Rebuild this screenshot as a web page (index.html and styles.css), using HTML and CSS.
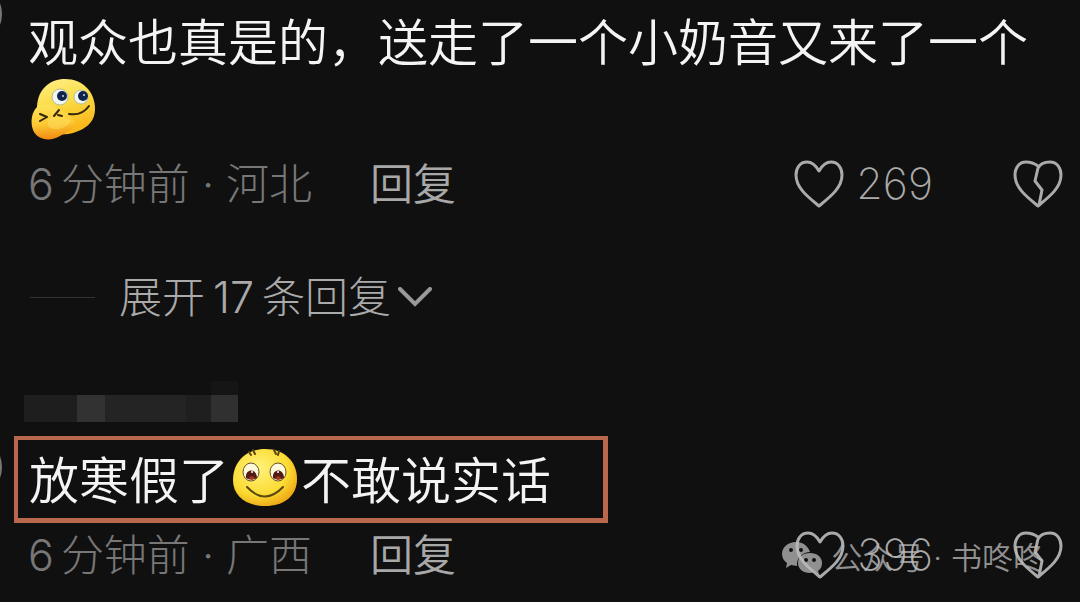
FILE: index.html
```
<!DOCTYPE html>
<html lang="zh-CN">
<head>
<meta charset="utf-8">
<title>评论</title>
<link rel="stylesheet" href="styles.css">
</head>
<body>
<svg class="defs" aria-hidden="true">
  <defs>
    <linearGradient id="skin" x1="0" y1="0" x2="0.3" y2="1">
      <stop offset="0" stop-color="#fff08a"/><stop offset="0.5" stop-color="#fbdc45"/><stop offset="1" stop-color="#f9b81c"/>
    </linearGradient>
    <linearGradient id="hand" x1="0.3" y1="0" x2="0.4" y2="1">
      <stop offset="0" stop-color="#fde35a"/><stop offset="0.55" stop-color="#fcc933"/><stop offset="1" stop-color="#f28a12"/>
    </linearGradient>
    <radialGradient id="face" cx="0.4" cy="0.35" r="0.7">
      <stop offset="0" stop-color="#fff27e"/><stop offset="0.65" stop-color="#fbdc33"/><stop offset="1" stop-color="#eda514"/>
    </radialGradient>
    <symbol id="heart" viewBox="0 0 50 48">
      <path d="M25 11C21 4 17 2 13 2C6 2 2 8 2 15C2 28 14 37 25 46C36 37 48 28 48 15C48 8 44 2 37 2C33 2 29 4 25 11Z"/>
    </symbol>
    <symbol id="broken" viewBox="0 0 50 48">
      <path d="M25 6C21 3 17 2 13 2C6 2 2 8 2 15C2 28 14 37 25 46C36 37 48 28 48 15C48 8 44 2 37 2C31 2 27 4 25 8L22 21L29 30L26 45"/>
    </symbol>
  </defs>
</svg>
<main class="comments">
  <article class="comment">
    <span class="avatar-edge"></span>
    <p class="text">观众也真是的，送走了一个小奶音又来了一个<svg class="emoji" viewBox="0 0 66 66" role="img" aria-label="偷笑">
      <path fill="url(#skin)" d="M7 30C8 13 20 3 35 3C53 3 65 16 65 33C65 47 54 55 38 58C22 60 6 50 7 30Z"/>
      <path fill="url(#hand)" d="M7 31C13 27 23 28 28 34C36 36 42 40 45 46C43 54 36 57 30 60C20 66 7 64 3 54C0 45 2 36 7 31Z"/>
      <path fill="#ffe267" opacity=".45" d="M18 43C26 39 36 40 41 45C36 53 24 56 18 50Z"/>
      <circle cx="30" cy="21" r="8" fill="#f0f6f2" stroke="#b5bd90"/><circle cx="51" cy="21" r="7" fill="#f0f6f2" stroke="#b5bd90"/>
      <circle cx="32" cy="20" r="5" fill="#11234f"/><circle cx="53" cy="20" r="5" fill="#11234f"/>
      <circle cx="33" cy="20" r="1" fill="#cde"/><circle cx="54" cy="19" r="1" fill="#cde"/>
      <path class="stroke" d="M39 38Q52 40 59 30M10 38L17 41L10 45M29 34L24 40M28 39L32 40"/>
    </svg></p>
    <footer class="meta">
      <span class="time"><span class="num">6</span>分钟前<span class="dot">·</span>河北</span>
      <button class="reply" type="button">回复</button>
      <button class="like" type="button" aria-label="赞 269"><svg class="icon"><use href="#heart"/></svg><span>269</span></button>
      <button class="dislike" type="button" aria-label="不喜欢"><svg class="icon"><use href="#broken"/></svg></button>
    </footer>
    <button class="expand" type="button">
      <span class="rule"></span><span>展开<span class="count">17</span>条回复</span><svg class="chevron" viewBox="0 0 34 20"><path d="M2 2L17 17L32 2"/></svg>
    </button>
  </article>
  <article class="comment">
    <div class="mosaic"><i class="tile-a"></i><i class="tile-b"></i><i class="tile-c"></i><i class="tile-d"></i><i class="tile-e"></i></div>
    <span class="avatar-edge"></span>
    <p class="text highlight"><span>放寒假了</span><svg class="emoji" viewBox="0 0 66 66" role="img" aria-label="微笑">
      <path fill="url(#face)" d="M33 5C53 5 65 18 65 35C65 52 52 62 33 62C14 62 1 52 1 36C1 18 14 5 33 5Z"/>
      <ellipse cx="19" cy="28" rx="8" ry="9" fill="#fff9dc" stroke="#665322"/><ellipse cx="46" cy="28" rx="8" ry="9" fill="#fff9dc" stroke="#665322"/>
      <path fill="#521b16" d="M14 34C13 24 25 24 25 34Q19 37 14 34ZM41 34C40 24 52 24 52 34Q46 37 41 34Z"/>
      <circle cx="20" cy="28" r="1" fill="#fff"/><circle cx="46" cy="28" r="1" fill="#fff"/>
      <path fill="#a23620" d="M16 34L20 32L23 34L20 36ZM43 34L46 32L50 34L46 36Z"/>
      <path class="stroke thin" d="M15 43Q33 62 51 43M17 8L19 11M21 6L23 10M42 6L44 10M47 7L46 11"/>
    </svg><span>不敢说实话</span></p>
    <footer class="meta">
      <span class="time"><span class="num">6</span>分钟前<span class="dot">·</span>广西</span>
      <button class="reply" type="button">回复</button>
      <button class="like" type="button" aria-label="赞 396"><svg class="icon"><use href="#heart"/></svg><span>396</span></button>
      <button class="dislike" type="button" aria-label="不喜欢"><svg class="icon"><use href="#broken"/></svg></button>
    </footer>
  </article>
</main>
<div class="watermark">
  <svg class="wechat" viewBox="0 0 42 34">
    <path fill-rule="evenodd" d="M15 1C7 1 1 6 1 13C1 17 3 20 6 22L5 27L10 24L16 25C15 17 22 11 29 11C27 5 22 1 15 1ZM10 7A2 2 0 1 1 10 11A2 2 0 1 1 10 7ZM20 7A2 2 0 1 1 20 11A2 2 0 1 1 20 7Z"/>
    <path fill-rule="evenodd" d="M29 12C22 12 17 16 17 22C17 28 22 32 29 32L34 31L38 33L37 30C40 28 41 25 41 22C41 16 36 12 29 12ZM25 17A2 2 0 1 1 25 21A2 2 0 1 1 25 17ZM33 17A2 2 0 1 1 33 21A2 2 0 1 1 33 17Z"/>
  </svg>
  <span>公众号<span class="dot">·</span>书咚咚</span>
</div>
</body>
</html>
```
FILE: styles.css
```
* { box-sizing: border-box; }
body {
  margin: 0;
  min-height: 100vh;
  position: relative;
  overflow: hidden;
  background: #101010;
  color: #f4f4f4;
  font-family: Inter, "Noto Sans CJK SC", sans-serif;
  font-weight: 300;
}
.defs { position: absolute; width: 0; height: 0; }
button {
  padding: 0;
  border: 0;
  background: none;
  color: inherit;
  font: inherit;
}
.comments { padding-top: 6px; }
.comment { position: relative; }
.avatar-edge {
  position: absolute;
  left: -58px;
  top: -22px;
  width: 60px;
  height: 60px;
  border: 2px solid #777;
  border-radius: 50%;
}
.comment + .comment .avatar-edge { top: 42px; }
.text {
  margin: 0;
  padding: 0 28px;
  font-family: "Noto Sans CJK SC DemiLight", "Noto Sans CJK SC", sans-serif;
  font-size: 50px;
  font-weight: 350;
  line-height: 66px;
}
.emoji {
  width: 66px;
  height: 66px;
  display: inline-block;
  vertical-align: top;
  margin: 4px 2px 0;
}
.meta {
  display: flex;
  align-items: center;
  height: 60px;
  margin-top: 12px;
  padding: 0 17px 0 28px;
  font-size: 43px;
  line-height: 60px;
}
.stroke {
  fill: none;
  stroke: #33270d;
  stroke-width: 2;
  stroke-linecap: round;
  stroke-linejoin: round;
}
.thin { stroke: #5b4511; }
.num { margin-right: 7px; }
.dot { margin: 0 12px; }
.count { margin: 0 8px; }
.time { color: #777; }
.reply { margin-left: 58px; color: #a8a8a8; font-weight: 350; }
.like {
  display: flex;
  align-items: center;
  gap: 12px;
  margin-left: auto;
  color: #aaa;
}
.like span { font-weight: 250; margin-bottom: 3px; }
.dislike { display: flex; margin-left: 80px; color: #aaa; }
.icon {
  width: 50px;
  height: 48px;
  fill: none;
  stroke: currentColor;
  stroke-width: 3;
  stroke-linejoin: round;
}
.expand {
  display: flex;
  align-items: center;
  margin: 53px 0 0 30px;
  font-size: 43px;
  line-height: 60px;
  color: #aaa;
}
.rule { width: 65px; height: 1px; margin-right: 24px; background: #333; }
.chevron {
  width: 34px;
  height: 20px;
  margin-left: 7px;
  fill: none;
  stroke: #999;
  stroke-width: 4;
  stroke-linecap: round;
}
.mosaic { display: flex; height: 27px; margin: 68px 0 0 24px; }
.tile-a { width: 53px; background: #1e1e1f; }
.tile-b { width: 28px; background: #323233; }
.tile-c { width: 81px; background: #242425; }
.tile-d { width: 25px; background: #1f1f20; }
.tile-e { width: 27px; background: #303031; box-shadow: 0 -14px #151516; }
.highlight {
  display: flex;
  align-items: center;
  width: fit-content;
  margin: 14px 0 0 14px;
  padding: 4px 52px 8px 11px;
  border: 4px solid #b9684e;
  border-right-width: 5px;
  border-bottom-width: 5px;
}
.highlight .emoji { margin: 0 3px; }
.highlight + .meta { margin-top: 2px; }
.watermark {
  position: absolute;
  right: 36px;
  bottom: 24px;
  display: flex;
  align-items: center;
  gap: 8px;
  color: #bbb;
  opacity: .75;
  font-size: 31px;
  font-weight: 350;
  line-height: 40px;
}
.watermark .dot { margin: 0 9px; }
.wechat { width: 42px; height: 34px; fill: currentColor; }
```
